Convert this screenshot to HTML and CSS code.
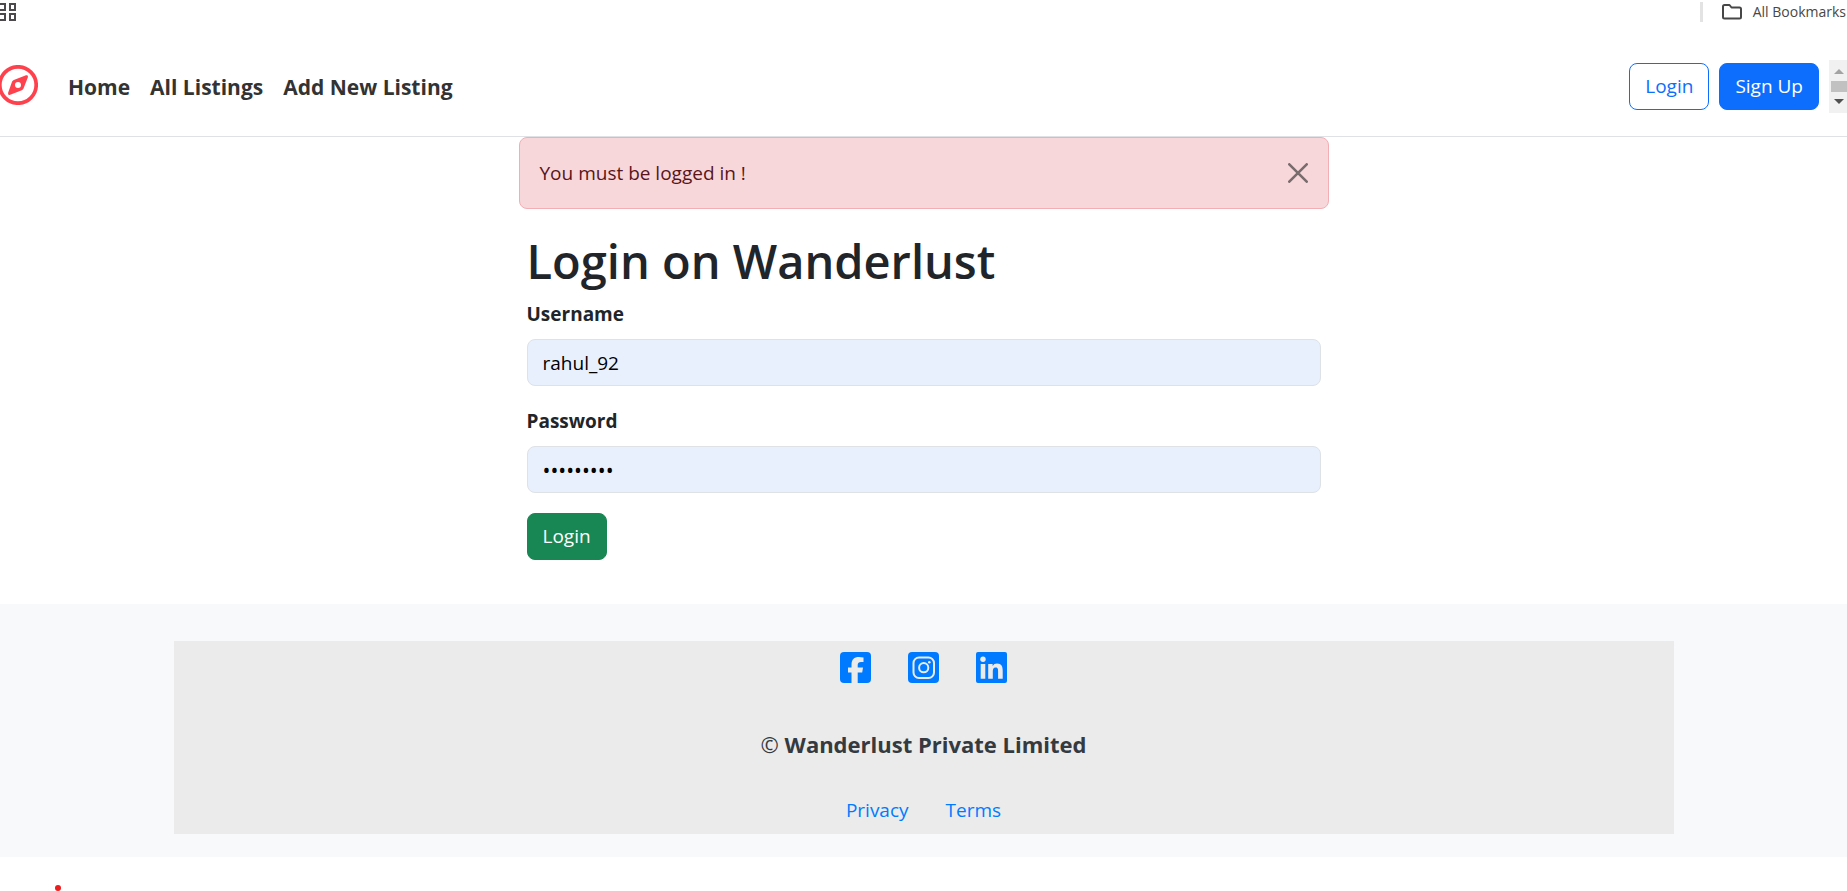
FILE: index.html
```html
<!DOCTYPE html>
<html lang="en">
<head>
<meta charset="utf-8">
<title>Wanderlust</title>
<link rel="stylesheet" href="styles.css">
</head>
<body>
<div class="bookmarks">
  <button class="apps" type="button" aria-label="Apps">
    <svg width="16" height="18" viewBox="0 0 16 18" fill="none" stroke="#4b494c" stroke-width="2"><path d="M-1 1H5V7H-1ZM10 1H15V7H10ZM-1 11H5V17H-1ZM10 11H15V17H10Z"/></svg>
  </button>
  <button class="all-bookmarks" type="button">
    <svg width="20" height="16" viewBox="0 0 20 16" fill="none" stroke="#474747" stroke-width="2" stroke-linejoin="round"><path d="M1 2.5Q1 1 2.500 1H7.500L9.500 3.500H17.500Q19 3.500 19 5V13Q19 14.500 17.500 14.500H2.500Q1 14.500 1 13Z"/></svg>
    <span>All Bookmarks</span>
  </button>
</div>

<nav class="navbar">
  <a class="brand" href="#" aria-label="Wanderlust">
    <svg width="38" height="40" viewBox="0 0 38 40"><circle cx="18" cy="20" r="18.200" fill="none" stroke="#fe424d" stroke-width="3.700"/><path fill="#fe424d" fill-rule="evenodd" d="M26 10.300 13.800 14.900Q12.600 15.400 12.100 16.600L8.100 27.800Q7.500 30.600 10.200 29.800L21.800 25.200Q23 24.700 23.500 23.500L27.900 12.300Q28.500 9.600 26 10.300ZM18 17A3 3 0 1 1 18 23A3 3 0 1 1 18 17Z"/></svg>
  </a>
  <a class="nav-link" href="#">Home</a>
  <a class="nav-link" href="#">All Listings</a>
  <a class="nav-link" href="#">Add New Listing</a>
  <div class="account">
    <a class="btn btn-outline" href="#">Login</a>
    <a class="btn btn-primary" href="#">Sign Up</a>
  </div>
  <div class="scrollbar" aria-hidden="true">
    <svg width="10" height="5" viewBox="0 0 10 5"><path d="M0 5 5 0 10 5Z" fill="#a3a3a3"/></svg>
    <span class="thumb"></span>
    <svg width="10" height="5" viewBox="0 0 10 5"><path d="M0 0 5 5 10 0Z" fill="#505050"/></svg>
  </div>
</nav>

<main class="content">
  <div class="alert" role="alert">
    <span>You must be logged in !</span>
    <button class="close" type="button" aria-label="Close">
      <svg width="20" height="20" viewBox="0 0 20 20" stroke="#796c6d" stroke-width="2.600" stroke-linecap="round"><path d="M1.300 1.300 18.700 18.700M18.700 1.300 1.300 18.700"/></svg>
    </button>
  </div>
  <form class="login">
    <h1>Login on Wanderlust</h1>
    <div class="field">
      <label for="username">Username</label>
      <input id="username" type="text" value="rahul_92">
    </div>
    <div class="field">
      <label for="password">Password</label>
      <input id="password" class="password" type="password" value="wanderers">
    </div>
    <button class="btn btn-success" type="button">Login</button>
  </form>
</main>

<footer class="footer">
  <div class="footer-info">
    <div class="socials">
      <a href="#" aria-label="Facebook"><svg width="31" height="31" viewBox="0 0 31 31"><rect width="31" height="31" rx="4" fill="#007bff"/><path fill="#ebebeb" d="M11.500 31V20.500H8V15.500H11.500V13C11.500 7.500 14 5 19 5Q21.500 5 23.500 5.400V10H21Q17.700 10 17.700 13V15.500H23L22.200 20.500H17.700V31Z"/></svg></a>
      <a href="#" aria-label="Instagram"><svg width="31" height="31" viewBox="0 0 31 31"><rect width="31" height="31" rx="4" fill="#007bff"/><g fill="none" stroke="#ebebeb" stroke-width="2"><rect x="5.500" y="5.500" width="20.500" height="20.500" rx="5.500"/><circle cx="15.700" cy="15.700" r="4.600"/></g><circle cx="21.300" cy="10.200" r="1.300" fill="#ebebeb"/></svg></a>
      <a href="#" aria-label="LinkedIn"><svg width="31" height="31" viewBox="0 0 31 31"><rect width="31" height="31" rx="2" fill="#007bff"/><g fill="#ebebeb"><circle cx="7" cy="7.200" r="2.700"/><path d="M4.700 12H9.300V26.700H4.700ZM12.200 12H16.600V14Q18 11.600 21 11.600C25.500 11.600 26.700 14.500 26.700 18.600V26.700H22.100V19.500C22.100 17.500 22 15.600 19.600 15.600S16.800 17.500 16.800 19.500V26.700H12.200Z"/></g></svg></a>
    </div>
    <div class="brandline"><span class="copyright">©</span> Wanderlust Private Limited</div>
    <div class="legal">
      <a href="#">Privacy</a>
      <a href="#">Terms</a>
    </div>
  </div>
</footer>
<div class="below"><span class="dot"></span></div>
</body>
</html>
```
FILE: styles.css
```css
* { box-sizing: border-box; }
body {
  margin: 0;
  min-height: 100vh;
  display: flex;
  flex-direction: column;
  overflow: hidden;
  background: #fff;
  color: #212529;
  font: 19px/30px "Open Sans", "Noto Sans", sans-serif;
}
a { text-decoration: none; }
button { font: inherit; cursor: pointer; }
svg { display: block; }

.bookmarks {
  display: flex;
  justify-content: space-between;
  align-items: center;
  height: 23px;
}
.apps, .all-bookmarks, .close {
  padding: 0;
  border: 0;
  background: none;
}
.all-bookmarks {
  display: flex;
  align-items: center;
  gap: 11px;
  padding-left: 19px;
  padding-right: 1px;
  border-left: 3px solid #e3e3e3;
  color: #474747;
  font-size: 14px;
  line-height: 20px;
}

.navbar {
  display: flex;
  align-items: center;
  gap: 20px;
  height: 114px;
  padding-top: 14px;
  border-bottom: 1px solid #dee2e6;
}
.brand { margin-right: 10px; padding-bottom: 4px; }
.nav-link {
  color: #333;
  font-size: 21px;
  font-weight: 700;
}
.account { display: flex; gap: 10px; margin-left: auto; }
.btn {
  padding: 8px 15px;
  border: 1px solid;
  border-radius: 8px;
  line-height: 29px;
}
.btn-outline { border-color: #0d6efd; color: #0d6efd; }
.btn-primary { border-color: #0d6efd; background: #0d6efd; color: #fff; }
.btn-success { border-color: #198754; background: #198754; color: #fff; }
.scrollbar {
  display: flex;
  flex-direction: column;
  align-items: center;
  justify-content: space-between;
  width: 18px;
  height: 53px;
  margin-left: -10px;
  padding: 9px 0 9px 2px;
  background: #f1f1f1;
}
.thumb { width: 100%; height: 11px; background: #c1c1c1; }

.content {
  width: 44%;
  max-width: 810px;
  margin: 0 auto;
}
.alert {
  display: flex;
  justify-content: space-between;
  align-items: center;
  padding: 20px;
  border: 1px solid #f1aeb5;
  border-radius: 8px;
  background: #f8d7da;
  color: #58151c;
}
.login { padding: 20px 8px 44px; }
h1 {
  margin: 0 0 6px;
  font-size: 47px;
  font-weight: 600;
  line-height: 64px;
}
.field { margin-bottom: 20px; }
label {
  display: block;
  margin-bottom: 10px;
  font-weight: 700;
}
input {
  display: block;
  width: 100%;
  height: 47px;
  padding: 8px 15px;
  border: 1px solid #dee2e6;
  border-radius: 8px;
  background: #e8f0fe;
  color: #000;
  font: inherit;
}
.password { font-size: 21px; }

.footer { padding: 37px 0 23px; background: #f8f9fa; }
.footer-info {
  width: 82%;
  max-width: 1500px;
  margin: 0 auto;
  padding-top: 11px;
  background: #ebebeb;
  text-align: center;
}
.socials, .legal { display: flex; justify-content: center; gap: 37px; }
.brandline {
  padding: 46px 0 36px;
  color: #343a40;
  font-size: 22px;
  font-weight: 700;
}
.copyright { font-weight: 400; }
.legal { padding-bottom: 9px; }
.legal a { color: #007bff; }
.below { padding: 28px 0 0 55px; }
.dot { display: block; width: 6px; height: 6px; border-radius: 50%; background: #ee1c1c; }
```
